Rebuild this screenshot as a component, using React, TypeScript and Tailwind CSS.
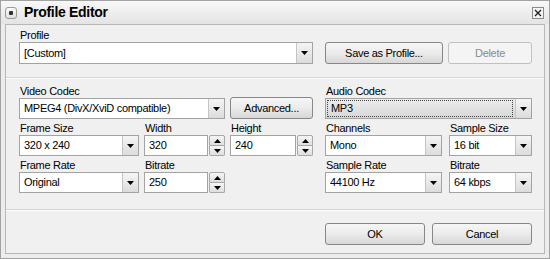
const font = "font-['Liberation_Sans',Arial,sans-serif]";

function Label({ children }: { children: React.ReactNode }) {
  return <div className="h-[13px] leading-[13px] pl-[1px] text-black">{children}</div>;
}

function Down({ w = 7, h = 4 }: { w?: number; h?: number }) {
  return (
    <svg width={w} height={h} viewBox={`0 0 ${w} ${h}`}>
      <polygon points={`0,0 ${w},0 ${w / 2},${h}`} fill="#000" />
    </svg>
  );
}

function Up({ w = 7, h = 4 }: { w?: number; h?: number }) {
  return (
    <svg width={w} height={h} viewBox={`0 0 ${w} ${h}`}>
      <polygon points={`0,${h} ${w},${h} ${w / 2},0`} fill="#000" />
    </svg>
  );
}

function DropBtn() {
  return (
    <div className="w-[16px] shrink-0 flex items-center justify-center border-l border-[#c4c4c4] bg-linear-to-b from-[#f5f5f5] to-[#dcdcdc]">
      <Down />
    </div>
  );
}

function Combo({ value, focused = false, tall = false }: { value: string; focused?: boolean; tall?: boolean }) {
  return (
    <div
      className={`flex ${tall ? "h-[22px]" : "h-[21px]"} border border-[#a3a3a3] ${
        focused ? "bg-linear-to-b from-[#ececec] to-[#d8d8d8]" : "bg-white"
      }`}
    >
      {focused ? (
        <div className="flex-1 m-[1px] mr-[2px] border border-dotted border-[#444] flex items-center pl-[3px]">{value}</div>
      ) : (
        <div className="flex-1 flex items-center pl-[4px]">{value}</div>
      )}
      <DropBtn />
    </div>
  );
}

function Spin({ value }: { value: string }) {
  return (
    <div className="flex h-[21px] gap-[1px]">
      <div className="flex-1 flex items-center pl-[4px] bg-white border border-[#a3a3a3]">{value}</div>
      <div className="w-[16px] flex flex-col">
        <div className="flex-1 flex items-center justify-center border border-[#a8a8a8] rounded-t-[2px] bg-linear-to-b from-[#f6f6f6] to-[#dedede]">
          <Up w={7} h={4} />
        </div>
        <div className="flex-1 flex items-center justify-center border border-t-0 border-[#a8a8a8] rounded-b-[2px] bg-linear-to-b from-[#f6f6f6] to-[#dedede]">
          <Down w={7} h={4} />
        </div>
      </div>
    </div>
  );
}

function Btn({ children, disabled = false, className = "" }: { children: React.ReactNode; disabled?: boolean; className?: string }) {
  return (
    <div
      className={`h-[22px] flex items-center justify-center rounded-[3px] border ${
        disabled
          ? "border-[#bfc2c4] bg-[#f4f4f4] text-[#8a8a8a]"
          : "border-[#878787] bg-linear-to-b from-[#f6f6f6] via-[#ebebeb] to-[#d7d7d7] text-black"
      } ${className}`}
    >
      {children}
    </div>
  );
}

function Separator() {
  return <div className="h-[2px] border-t border-[#d2d2d2] border-b border-b-white" />;
}

export default function App() {
  return (
    <div className={`w-[550px] h-[259px] flex flex-col border border-[#a2a2a2] bg-[#ececec] text-[11px] tracking-[-0.3px] ${font}`}>
      {/* title bar */}
      <div className="h-[23px] flex items-center pl-[4px] pr-[5px] bg-linear-to-b from-[#f8f8f8] to-[#e4e4e4]">
        <div className="w-[12px] h-[12px] rounded-[3px] border border-[#9a9a9a] bg-linear-to-b from-[#fafafa] to-[#e0e0e0] flex items-center justify-center">
          <div className="w-[4px] h-[4px] rounded-[1px] bg-[#333]" />
        </div>
        <div className="ml-[7px] text-[14px] font-bold tracking-[-0.3px] text-black">Profile Editor</div>
        <div className="ml-auto w-[12px] h-[12px] border border-[#8a8a8a] bg-[#f3f3f3] flex items-center justify-center">
          <svg width="8" height="8" viewBox="0 0 8 8">
            <path d="M1 1 L7 7 M7 1 L1 7" stroke="#222" strokeWidth="1.4" />
          </svg>
        </div>
      </div>

      {/* body */}
      <div className="flex-1 mx-[4px] mb-[4px] border border-[#b7b7b7] bg-[#f0f0f0] flex flex-col">
        {/* profile */}
        <div className="pt-[4px] pb-[13px] pl-[13px] pr-[12px] flex gap-[12px] items-end">
          <div className="w-[294px]">
            <Label>Profile</Label>
            <Combo value="[Custom]" tall />
          </div>
          <div className="w-[207px] flex gap-[5px]">
            <Btn className="w-[118px]">Save as Profile...</Btn>
            <Btn disabled className="w-[84px]">Delete</Btn>
          </div>
        </div>

        <Separator />

        {/* codecs */}
        <div className="pt-[6px] pb-[16px] pl-[13px] pr-[12px] flex gap-[12px]">
          <div className="w-[294px] grid grid-cols-[120px_81px_83px] gap-x-[5px] gap-y-[3px] content-start">
            <div className="col-span-2">
              <Label>Video Codec</Label>
              <Combo value="MPEG4 (DivX/XviD compatible)" />
            </div>
            <div className="flex flex-col justify-end">
              <Btn className="h-[21px]">Advanced...</Btn>
            </div>
            <div>
              <Label>Frame Size</Label>
              <Combo value="320 x 240" />
            </div>
            <div>
              <Label>Width</Label>
              <Spin value="320" />
            </div>
            <div>
              <Label>Height</Label>
              <Spin value="240" />
            </div>
            <div>
              <Label>Frame Rate</Label>
              <Combo value="Original" />
            </div>
            <div>
              <Label>Bitrate</Label>
              <Spin value="250" />
            </div>
          </div>

          <div className="w-[207px] grid grid-cols-[117px_83px] gap-x-[7px] gap-y-[3px] content-start">
            <div className="col-span-2">
              <Label>Audio Codec</Label>
              <Combo value="MP3" focused />
            </div>
            <div>
              <Label>Channels</Label>
              <Combo value="Mono" />
            </div>
            <div>
              <Label>Sample Size</Label>
              <Combo value="16 bit" />
            </div>
            <div>
              <Label>Sample Rate</Label>
              <Combo value="44100 Hz" />
            </div>
            <div>
              <Label>Bitrate</Label>
              <Combo value="64 kbps" />
            </div>
          </div>
        </div>

        <Separator />

        {/* footer */}
        <div className="pt-[12px] pl-[13px] pr-[12px] flex">
          <div className="ml-auto w-[207px] flex gap-[7px]">
            <Btn className="w-[100px]">OK</Btn>
            <Btn className="w-[100px]">Cancel</Btn>
          </div>
        </div>
      </div>
    </div>
  );
}
